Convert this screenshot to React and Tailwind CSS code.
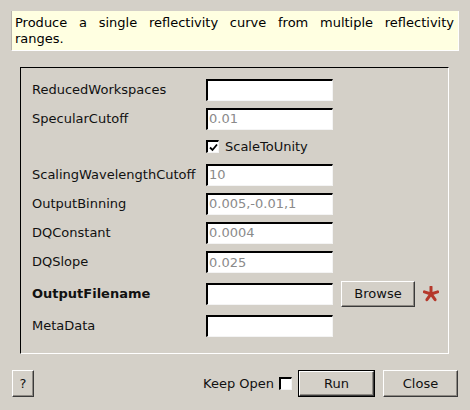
import React from "react";

const rows = [
  { label: "ReducedWorkspaces", value: "", h: "h-[29px]" },
  { label: "SpecularCutoff", value: "0.01", h: "h-[29px]" },
  { check: "ScaleToUnity", h: "h-[27px]" },
  { label: "ScalingWavelengthCutoff", value: "10", h: "h-[29px]" },
  { label: "OutputBinning", value: "0.005,-0.01,1", h: "h-[29px]" },
  { label: "DQConstant", value: "0.0004", h: "h-[29px]" },
  { label: "DQSlope", value: "0.025", h: "h-[30px]" },
  { label: "OutputFilename", value: "", bold: true, browse: true, h: "h-[34px]" },
  { label: "MetaData", value: "", h: "h-[30px]" },
];

function Field({ value }) {
  return (
    <div className="w-[127px] h-[22px] bg-white border-t-2 border-l-2 border-r border-b border-t-black border-l-black border-r-[#f4f4f4] border-b-[#f4f4f4] flex items-center pl-[1px] text-[#8a8a8a] overflow-hidden whitespace-nowrap">
      {value}
    </div>
  );
}

function Check({ checked }) {
  return (
    <div className="w-[13px] h-[13px] bg-white border-t-2 border-l-2 border-r border-b border-t-black border-l-black border-r-[#f4f4f4] border-b-[#f4f4f4] flex items-center justify-center">
      {checked && (
        <svg width="9" height="9" viewBox="0 0 9 9">
          <path d="M1 4.5 L3.5 7 L8 1.5" fill="none" stroke="#000" strokeWidth="1.8" />
        </svg>
      )}
    </div>
  );
}

function Btn({ children, className = "" }) {
  return (
    <div
      className={
        "flex items-center justify-center border border-t-white border-l-white border-r-[#3a3a3a] border-b-[#3a3a3a] shadow-[inset_-1px_-1px_0_#8e8a84] text-[#111] " +
        className
      }
    >
      {children}
    </div>
  );
}

function Star() {
  const arms = [-90, -18, 54, 126, 198];
  return (
    <svg width="16" height="16" viewBox="-8 -8 16 16" className="ml-[8px]">
      {arms.map((a) => {
        const r = (a * Math.PI) / 180;
        return (
          <line
            key={a}
            x1="0"
            y1="0"
            x2={7 * Math.cos(r)}
            y2={7 * Math.sin(r)}
            stroke="#b5382b"
            strokeWidth="3"
            strokeLinecap="round"
          />
        );
      })}
    </svg>
  );
}

export default function App() {
  return (
    <div
      className="w-[470px] h-[410px] bg-[#d4d0c8] text-[13px] text-[#111] overflow-hidden"
      style={{ fontFamily: '"DejaVu Sans", "Liberation Sans", sans-serif' }}
    >
      <div className="pt-[11px] pl-[11px]">
        <div className="w-[448px] h-[40px] bg-[#ffffe1] border-l border-l-[#b8b4ac] border-r border-b border-r-white border-b-white pl-[3px] pr-[4px] pt-[4px] leading-[16px] text-black">
          <div className="text-justify [text-align-last:justify]">
            Produce a single reflectivity curve from multiple reflectivity
          </div>
          <div>ranges.</div>
        </div>
      </div>

      <div className="mt-[16px] ml-[20px] w-[429px] h-[287px] border-t border-l border-t-black border-l-black border-r border-b border-r-white border-b-white pl-[11px] pt-[7px]">
        {rows.map((r, i) => (
          <div key={i} className={"flex items-center " + r.h}>
            {r.check ? (
              <div className="flex items-center gap-[6px] ml-[174px]">
                <Check checked />
                <span>{r.check}</span>
              </div>
            ) : (
              <>
                <div className={"w-[174px] whitespace-nowrap " + (r.bold ? "font-bold" : "")}>{r.label}</div>
                <Field value={r.value} />
                {r.browse && (
                  <>
                    <Btn className="ml-[8px] w-[74px] h-[26px]">Browse</Btn>
                    <Star />
                  </>
                )}
              </>
            )}
          </div>
        ))}
      </div>

      <div className="mt-[16px] flex items-center h-[27px] pl-[12px] pr-[12px]">
        <Btn className="w-[22px] h-[27px]">?</Btn>
        <div className="flex-1" />
        <span>Keep Open</span>
        <div className="ml-[5px]">
          <Check />
        </div>
        <div className="ml-[6px] w-[77px] h-[27px] border border-black">
          <Btn className="w-full h-full">Run</Btn>
        </div>
        <Btn className="ml-[8px] w-[75px] h-[27px]">Close</Btn>
      </div>
    </div>
  );
}
